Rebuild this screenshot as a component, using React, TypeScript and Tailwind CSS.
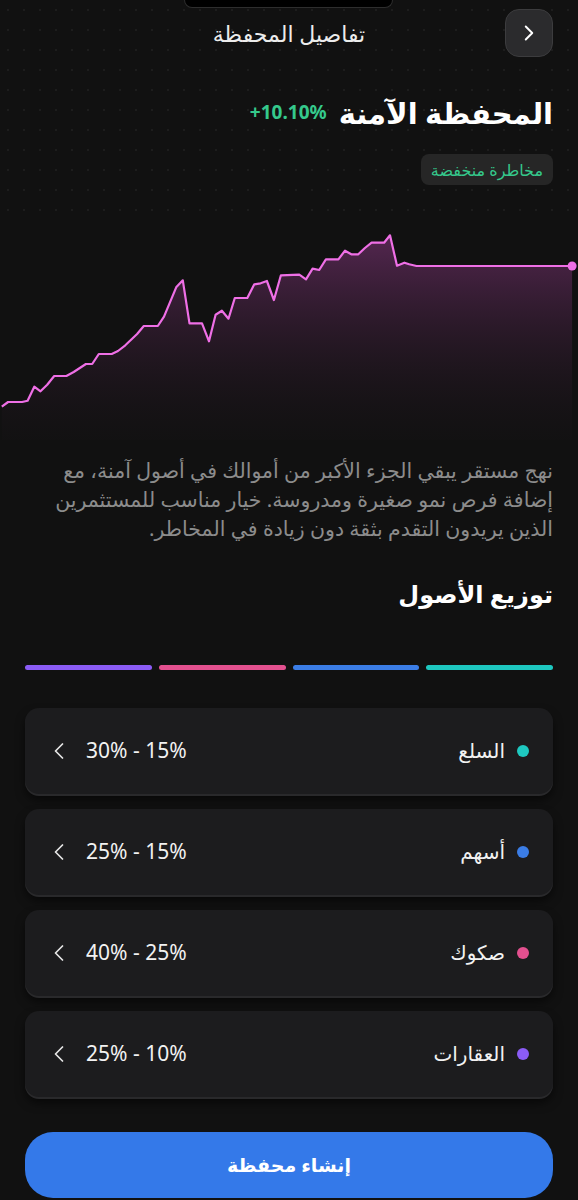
import React from 'react';
import { ChevronLeft, ChevronRight } from 'lucide-react';

const FONT = { fontFamily: '"Noto Sans", "DejaVu Sans", sans-serif' };

// chart points, traced from the reference (x in 1568 units, y in 660 units)
const RAW: [number, number][] = [
  [5, 560], [22, 546], [60, 546], [75, 542], [93, 500], [110, 514], [128, 494], [147, 468],
  [180, 468], [200, 456], [233, 432], [250, 432], [268, 402], [303, 402], [320, 393], [340, 376],
  [372, 342], [390, 318], [428, 318], [445, 290], [478, 202], [496, 181], [514, 310], [548, 310],
  [567, 364], [585, 284], [602, 272], [620, 296], [637, 234], [671, 234], [690, 193], [707, 190],
  [724, 183], [743, 240], [762, 166], [812, 164], [830, 178], [848, 146], [866, 150], [884, 118],
  [918, 118], [936, 92], [953, 103], [972, 103], [990, 84], [1008, 68], [1042, 68], [1058, 46],
  [1077, 137], [1097, 128], [1110, 133], [1130, 138], [1552, 138],
];

const points = RAW.map(([x, y]) => [(x * 578) / 1568, y / 3] as [number, number]);

const assets = [
  { name: 'السلع', range: '30% - 15%', color: 'bg-[#1ec8c0]' },
  { name: 'أسهم', range: '25% - 15%', color: 'bg-[#3b7de6]' },
  { name: 'صكوك', range: '40% - 25%', color: 'bg-[#e3508f]' },
  { name: 'العقارات', range: '25% - 10%', color: 'bg-[#8b5cf6]' },
];

const bars = ['bg-[#1ec8c0]', 'bg-[#3b7de6]', 'bg-[#e3508f]', 'bg-[#8b5cf6]'];

const PerfChart: React.FC = () => {
  const line = points.map(([x, y], i) => `${i === 0 ? 'M' : 'L'}${x.toFixed(1)},${y.toFixed(1)}`).join(' ');
  const last = points[points.length - 1];
  const area = `${line} L${last[0].toFixed(1)},220 L${points[0][0].toFixed(1)},220 Z`;

  return (
    <svg width="578" height="220" viewBox="0 0 578 220" className="block">
      <defs>
        <linearGradient id="perfFill" x1="0" y1="15" x2="0" y2="220" gradientUnits="userSpaceOnUse">
          <stop offset="0%" stopColor="#5c2957" stopOpacity={0.9} />
          <stop offset="100%" stopColor="#1a1419" stopOpacity={0.15} />
        </linearGradient>
      </defs>
      <path d={area} fill="url(#perfFill)" />
      <path d={line} fill="none" stroke="#ef6fe6" strokeWidth={2.2} strokeLinejoin="round" />
      <circle cx={last[0]} cy={last[1]} r={4.5} fill="#ef6fe6" />
    </svg>
  );
};

export default function App() {
  return (
    <div dir="rtl" style={FONT} className="relative min-h-[1200px] w-[578px] bg-[#111111] text-white overflow-hidden">
      {/* notch */}
      <div className="absolute left-[184px] top-0 h-[8px] w-[209px] rounded-b-[10px] bg-black border-b border-x border-[#2e2e2e]" />

      <div className="px-[25px] pt-[9px] pb-[35px] bg-[radial-gradient(circle,#1d1d1d_1px,transparent_1.3px)] bg-size-[16px_20px]">
        {/* header */}
        <div className="grid grid-cols-[48px_1fr_48px] items-center h-[48px]">
          <button className="h-[48px] w-[48px] rounded-[14px] bg-[#2b2b2d] border border-[#3c3c3e] flex items-center justify-center">
            <ChevronRight size={26} strokeWidth={1.8} className="text-white" />
          </button>
          <h1 className="text-center text-[22px] text-[#ececec]">تفاصيل المحفظة</h1>
          <div />
        </div>

        {/* title */}
        <div className="mt-[35px] flex items-center gap-[12px] h-[40px]">
          <h2 className="text-[29px] font-bold leading-none">المحفظة الآمنة</h2>
          <span dir="ltr" className="text-[19px] font-bold text-[#35c98c]">+10.10%</span>
        </div>

        <div className="mt-[22px] flex">
          <span className="h-[31px] px-[10px] rounded-[8px] bg-[#262626] text-[#35c98c] text-[16px] flex items-center">
            مخاطرة منخفضة
          </span>
        </div>
      </div>

      <PerfChart />

      <div className="px-[25px]">
        <p className="mt-[16px] text-[20.5px] leading-[29px] text-[#8c8c8c]">
          نهج مستقر يبقي الجزء الأكبر من أموالك في أصول آمنة، مع إضافة فرص نمو صغيرة ومدروسة. خيار مناسب للمستثمرين الذين يريدون التقدم بثقة دون زيادة في المخاطر.
        </p>

        <h3 className="mt-[33px] text-[24px] font-bold leading-[36px]">توزيع الأصول</h3>

        <div className="mt-[53px] flex gap-[7px]">
          {bars.map((c) => (
            <div key={c} className={`h-[5px] flex-1 rounded-full ${c}`} />
          ))}
        </div>

        <div className="mt-[38px] flex flex-col gap-[15px]">
          {assets.map((a) => (
            <div
              key={a.name}
              className="h-[86px] rounded-[14px] bg-[#1c1c1e] shadow-[0_2px_0_#29292b,0_6px_10px_rgba(0,0,0,0.55)] flex items-center justify-between pr-[24px] pl-[20px]"
            >
              <div className="flex items-center gap-[12px]">
                <span className={`h-[12px] w-[12px] rounded-full ${a.color}`} />
                <span className="text-[20px] text-[#f2f2f2]">{a.name}</span>
              </div>
              <div className="flex items-center gap-[13px]">
                <span dir="ltr" className="text-[21px] text-[#f2f2f2]">{a.range}</span>
                <ChevronLeft size={28} strokeWidth={1.5} className="text-[#e6e6e6]" />
              </div>
            </div>
          ))}
        </div>

        <button className="mt-[35px] w-full h-[66px] rounded-[28px] bg-[#3479e9] text-[19px] font-bold text-white flex items-center justify-center">
          إنشاء محفظة
        </button>
      </div>
    </div>
  );
}
